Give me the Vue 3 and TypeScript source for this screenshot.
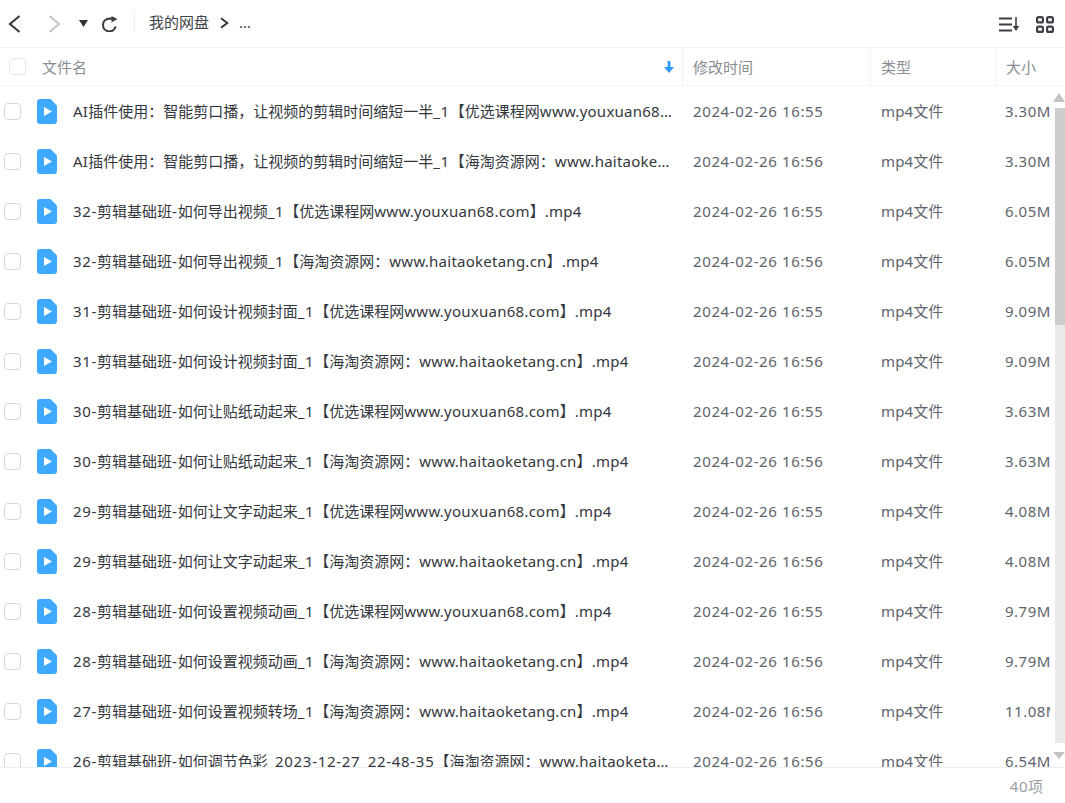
<script setup lang="ts">
interface Row { name: string; date: string; size: string }
const rows: Row[] = [
  { name: 'AI插件使用：智能剪口播，让视频的剪辑时间缩短一半_1【优选课程网www.youxuan68.com】.mp4', date: '2024-02-26 16:55', size: '3.30M' },
  { name: 'AI插件使用：智能剪口播，让视频的剪辑时间缩短一半_1【海淘资源网：www.haitaoketang.cn】.mp4', date: '2024-02-26 16:56', size: '3.30M' },
  { name: '32-剪辑基础班-如何导出视频_1【优选课程网www.youxuan68.com】.mp4', date: '2024-02-26 16:55', size: '6.05M' },
  { name: '32-剪辑基础班-如何导出视频_1【海淘资源网：www.haitaoketang.cn】.mp4', date: '2024-02-26 16:56', size: '6.05M' },
  { name: '31-剪辑基础班-如何设计视频封面_1【优选课程网www.youxuan68.com】.mp4', date: '2024-02-26 16:55', size: '9.09M' },
  { name: '31-剪辑基础班-如何设计视频封面_1【海淘资源网：www.haitaoketang.cn】.mp4', date: '2024-02-26 16:56', size: '9.09M' },
  { name: '30-剪辑基础班-如何让贴纸动起来_1【优选课程网www.youxuan68.com】.mp4', date: '2024-02-26 16:55', size: '3.63M' },
  { name: '30-剪辑基础班-如何让贴纸动起来_1【海淘资源网：www.haitaoketang.cn】.mp4', date: '2024-02-26 16:56', size: '3.63M' },
  { name: '29-剪辑基础班-如何让文字动起来_1【优选课程网www.youxuan68.com】.mp4', date: '2024-02-26 16:55', size: '4.08M' },
  { name: '29-剪辑基础班-如何让文字动起来_1【海淘资源网：www.haitaoketang.cn】.mp4', date: '2024-02-26 16:56', size: '4.08M' },
  { name: '28-剪辑基础班-如何设置视频动画_1【优选课程网www.youxuan68.com】.mp4', date: '2024-02-26 16:55', size: '9.79M' },
  { name: '28-剪辑基础班-如何设置视频动画_1【海淘资源网：www.haitaoketang.cn】.mp4', date: '2024-02-26 16:56', size: '9.79M' },
  { name: '27-剪辑基础班-如何设置视频转场_1【海淘资源网：www.haitaoketang.cn】.mp4', date: '2024-02-26 16:56', size: '11.08M' },
  { name: '26-剪辑基础班-如何调节色彩_2023-12-27_22-48-35【海淘资源网：www.haitaoketang.cn】.mp4', date: '2024-02-26 16:56', size: '6.54M' },
]
// Digits and letters sit a little wider than the CJK runs in the reference's rendering.
const runs = (s: string): string[] => s.match(/[0-9_-]+|[\x00-\x7F]+|[^\x00-\x7F]+/g) ?? []
const runClass = (s: string): string => (/^[0-9_-]/.test(s) ? 'num' : /^[\x00-\x7F]/.test(s) ? 'latin' : '')
</script>

<template>
  <div class="page">
    <header class="toolbar">
      <svg class="ic back" width="13" height="18" viewBox="0 0 13 18"><path d="M11.5 1 2 9l9.5 8" fill="none" stroke="#3b3f45" stroke-width="2.2" /></svg>
      <svg class="ic fwd" width="13" height="18" viewBox="0 0 13 18"><path d="m1.5 1 9.5 8-9.5 8" fill="none" stroke="#c4c6c9" stroke-width="2.2" /></svg>
      <svg class="ic caret" width="9" height="7" viewBox="0 0 9 7"><path d="M0 0h9L4.5 7z" fill="#2f3237" /></svg>
      <svg class="ic refresh" width="17" height="16" viewBox="0 0 17 16"><path d="M14.6 10.500A6.400 6.400 0 1 1 8 2.600h3" fill="none" stroke="#3b3f45" stroke-width="2.100" /><path d="M10.500 0l6 3-6 3.400z" fill="#3b3f45" /></svg>
      <span class="divider"></span>
      <span class="crumb">我的网盘</span>
      <svg class="ic crumb-arrow" width="9" height="12" viewBox="0 0 9 12"><path d="m1 1.200 6.200 4.800L1 10.800" fill="none" stroke="#33363b" stroke-width="2" /></svg>
      <span class="crumb dots">...</span>
      <span class="spacer"></span>
      <svg class="ic sort" width="21" height="15" viewBox="0 0 21 15"><path d="M0 1.500h13M0 7.500h13M0 13.500h13" stroke="#3b3f45" stroke-width="2" /><path d="M17 0v10" stroke="#3b3f45" stroke-width="1.600" /><path d="M13.800 9h6.400L17 14z" fill="#3b3f45" /></svg>
      <svg class="ic grid" width="18" height="17" viewBox="0 0 18 17"><g fill="none" stroke="#3b3f45" stroke-width="2.200"><rect x="1.100" y="1.100" width="5.800" height="5.300" rx="1.500" /><rect x="11.100" y="1.100" width="5.800" height="5.300" rx="1.500" /><rect x="1.100" y="10.600" width="5.800" height="5.300" rx="1.500" /><rect x="11.100" y="10.600" width="5.800" height="5.300" rx="1.500" /></g></svg>
    </header>

    <div class="thead">
      <div class="th th-name">
        <span class="check head-check"></span>
        <span class="th-label">文件名</span>
        <svg class="sort-arrow" width="10" height="12" viewBox="0 0 10 12"><path d="M3.600 0h2.800v6H10L5 12 0 6h3.600z" fill="#2f9bf5" /></svg>
      </div>
      <div class="th th-date">修改时间</div>
      <div class="th th-type">类型</div>
      <div class="th th-size">大小</div>
    </div>

    <div class="body">
      <div v-for="(r, i) in rows" :key="i" class="row">
        <div class="cell c-name">
          <span class="check"></span>
          <svg class="file" width="20" height="25" viewBox="0 0 20 25"><path d="M3 0h10.500L20 6.500V22a3 3 0 0 1-3 3H3a3 3 0 0 1-3-3V3a3 3 0 0 1 3-3z" fill="#3fa9ff" /><path d="M7 8v9l8-4.500z" fill="#fff" /></svg>
          <span class="name"><span v-for="(t, j) in runs(r.name)" :key="j" :class="runClass(t)">{{ t }}</span></span>
        </div>
        <div class="cell c-date">{{ r.date }}</div>
        <div class="cell c-type">mp4文件</div>
        <div class="cell c-size">{{ r.size }}</div>
      </div>
      <div class="scrollbar" aria-hidden="true">
        <span class="arrow up"></span>
        <span class="track"><span class="thumb"></span></span>
        <span class="arrow down"></span>
      </div>
    </div>

    <footer class="footer"><span class="foot-num">40</span>项</footer>
  </div>
</template>

<style>
html, body { margin: 0; background: #fff; }
</style>

<style scoped>
.page {
  width: 1065px;
  height: 803px;
  overflow: hidden;
  display: flex;
  flex-direction: column;
  background: #fff;
  font-family: "Noto Sans", "Noto Sans CJK SC", sans-serif;
  font-size: 15px;
  line-height: 20px;
  color: #3f4349;
}
.latin { letter-spacing: 0.25px; }
.num { letter-spacing: 0.7px; }
.toolbar {
  flex: none;
  height: 47px;
  box-sizing: content-box;
  border-bottom: 1px solid #f1f2f3;
  display: flex;
  align-items: center;
  padding-left: 8px;
  padding-right: 11px;
}
.ic { flex: none; display: block; }
.fwd { margin-left: 27px; }
.caret { margin-left: 18px; margin-bottom: 1px; }
.refresh { margin-left: 13px; }
.divider { width: 1px; height: 22px; background: #eceded; margin-left: 16px; margin-bottom: 5px; }
.crumb { margin-left: 14px; margin-bottom: 3px; color: #3f4349; }
.crumb-arrow { margin-left: 11px; margin-bottom: 1px; }
.dots { margin-left: 10px; }
.spacer { flex: 1; }
.sort, .grid { margin-top: 2px; }
.grid { margin-left: 16px; }
.thead {
  flex: none;
  height: 37px;
  border-bottom: 1px solid #f4f5f6;
  display: flex;
  color: #8a8d92;
}
.th { display: flex; align-items: center; box-sizing: border-box; padding-left: 10px; }
.th + .th { border-left: 1px solid #f1f2f3; }
.th-name { width: 682px; padding-left: 9px; }
.th-date { width: 188px; }
.th-type { width: 125px; padding-left: 10px; }
.th-size { width: 70px; padding-left: 10px; }
.th-label { margin-left: 16px; }
.sort-arrow { margin-left: auto; margin-right: 8px; }
.check {
  flex: none;
  width: 17px;
  height: 17px;
  box-sizing: border-box;
  border: 1px solid #d5d8dd;
  border-radius: 4px;
  background: #fff;
}
.head-check { border-color: #e3e4e6; }
.body {
  position: relative;
  flex: 1;
  min-height: 0;
  overflow: hidden;
}
.row { height: 50px; display: flex; align-items: center; }
.cell { box-sizing: border-box; white-space: nowrap; overflow: hidden; }
.c-name { width: 683px; display: flex; align-items: center; padding-left: 4px; padding-right: 9px; }
.file { flex: none; margin-left: 16px; margin-right: 16px; }
.name { flex: 1; min-width: 0; overflow: hidden; text-overflow: ellipsis; color: #33373d; }
.c-date { width: 188px; padding-left: 10px; color: #60646a; letter-spacing: 0.62px; }
.c-type { width: 125px; padding-left: 10px; color: #60646a; letter-spacing: 0.1px; }
.c-size { width: 54px; padding-left: 9px; color: #60646a; letter-spacing: 0.5px; }
.scrollbar {
  position: absolute;
  top: 0;
  right: 0;
  bottom: 0;
  width: 12px;
  display: flex;
  flex-direction: column;
  align-items: flex-end;
}
.arrow { flex: none; width: 0; height: 0; border-left: 6px solid transparent; border-right: 6px solid transparent; }
.up { margin-top: 7px; border-bottom: 9px solid #c4c4c4; }
.down { margin-bottom: 8px; border-top: 7px solid #c4c4c4; }
.track { flex: 1; width: 10px; margin: 6px 0 9px; background: #eaeaea; }
.thumb { display: block; height: 217px; background: #cdcdcd; }
.footer {
  flex: none;
  height: 35px;
  border-top: 1px solid #eeeff0;
  display: flex;
  align-items: center;
  justify-content: flex-end;
  padding-right: 22px;
  color: #9a9c9f;
}
.foot-num { letter-spacing: 0.5px; }
</style>
